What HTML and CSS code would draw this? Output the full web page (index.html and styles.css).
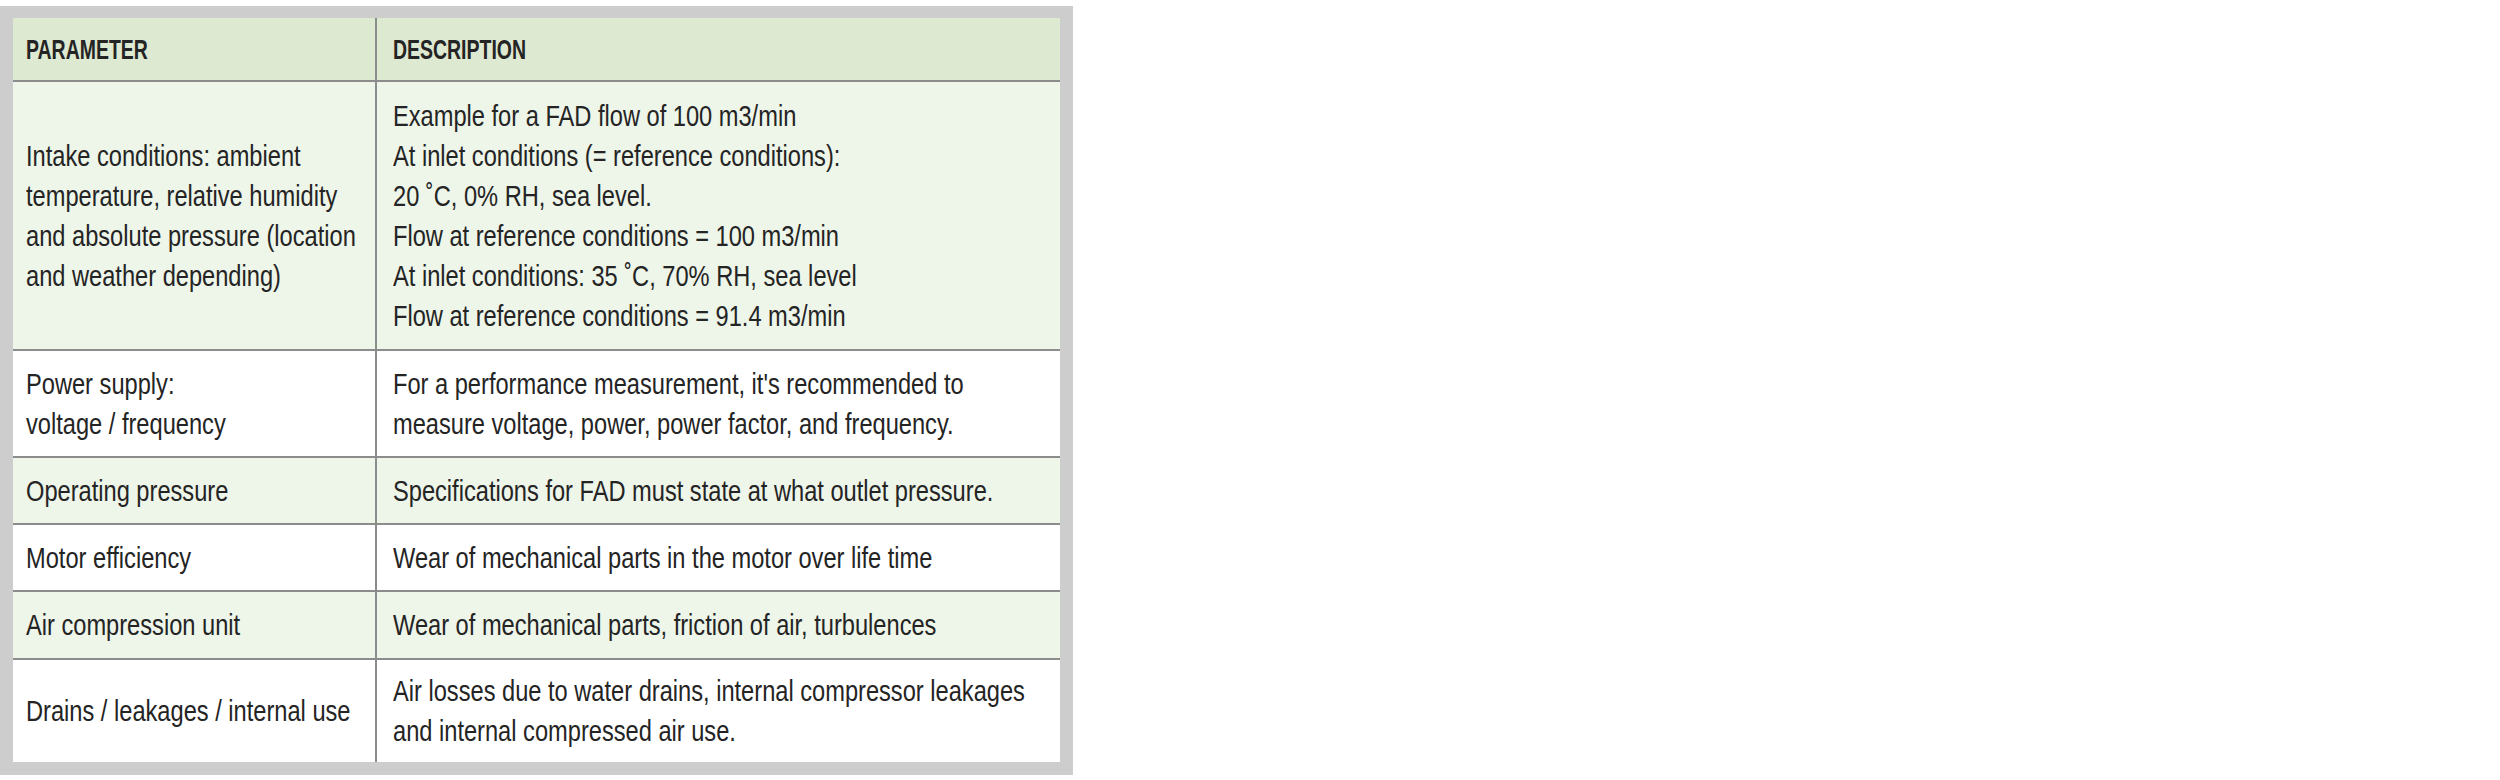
FILE: index.html
```html
<!DOCTYPE html>
<html lang="en">
<head>
<meta charset="utf-8">
<title>Parameters</title>
<link rel="stylesheet" href="styles.css">
</head>
<body>
<div class="frame">
  <table class="params">
    <colgroup>
      <col class="c1">
      <col class="c2">
    </colgroup>
    <thead>
      <tr class="head">
        <th><span class="t">PARAMETER</span></th>
        <th><span class="t">DESCRIPTION</span></th>
      </tr>
    </thead>
    <tbody>
      <tr class="shade r1">
        <td><span class="t">Intake conditions: ambient<br>temperature, relative humidity<br>and absolute pressure (location<br>and weather depending)</span></td>
        <td><span class="t">Example for a FAD flow of 100 m3/min<br>At inlet conditions (= reference conditions):<br>20 ˚C, 0% RH, sea level.<br>Flow at reference conditions = 100 m3/min<br>At inlet conditions: 35 ˚C, 70% RH, sea level<br>Flow at reference conditions = 91.4 m3/min</span></td>
      </tr>
      <tr class="r2">
        <td><span class="t">Power supply:<br>voltage / frequency</span></td>
        <td><span class="t">For a performance measurement, it's recommended to<br>measure voltage, power, power factor, and frequency.</span></td>
      </tr>
      <tr class="shade r3">
        <td><span class="t">Operating pressure</span></td>
        <td><span class="t">Specifications for FAD must state at what outlet pressure.</span></td>
      </tr>
      <tr class="r4">
        <td><span class="t">Motor efficiency</span></td>
        <td><span class="t">Wear of mechanical parts in the motor over life time</span></td>
      </tr>
      <tr class="shade r5">
        <td><span class="t">Air compression unit</span></td>
        <td><span class="t">Wear of mechanical parts, friction of air, turbulences</span></td>
      </tr>
      <tr class="r6">
        <td><span class="t">Drains / leakages / internal use</span></td>
        <td><span class="t">Air losses due to water drains, internal compressor leakages<br>and internal compressed air use.</span></td>
      </tr>
    </tbody>
  </table>
</div>
</body>
</html>
```
FILE: styles.css
```css
html, body {
  margin: 0;
  padding: 0;
  background: #ffffff;
}

body {
  padding-top: 6px;
}

.frame {
  width: 1073px;
  height: 769px;
  box-sizing: border-box;
  background: #cdcdcd;
  padding: 12px 13px 13px 13px;
}

.params {
  width: 1047px;
  border-collapse: collapse;
  table-layout: fixed;
  background: #ffffff;
  font-family: "Liberation Sans", Arial, sans-serif;
  font-size: 29px;
  line-height: 40px;
  color: #242424;
}

.c1 { width: 363px; }
.c2 { width: 684px; }

.t {
  display: inline-block;
  white-space: nowrap;
  transform: scaleX(0.815);
  transform-origin: 0 50%;
}

.head .t {
  transform: scaleX(0.695);
}

.params th,
.params td {
  padding: 0 12px 0 13px;
  vertical-align: middle;
  text-align: left;
  border-top: 2px solid #8c8c8c;
  border-left: 2px solid #8c8c8c;
  overflow: visible;
}

.params th:first-child,
.params td:first-child {
  border-left: none;
}

.params td:last-child,
.params th:last-child {
  padding-left: 16px;
}

.head th {
  border-top: none;
  background: #dee9d1;
  font-weight: bold;
  font-size: 28px;
  height: 60px;
  padding-top: 2px;
}

.shade td {
  background: #eef5e9;
}

.r1 td { height: 267px; }
.r2 td { height: 105px; }
.r3 td { height: 65px; }
.r4 td { height: 65px; }
.r5 td { height: 66px; }
.r6 td { height: 102px; }
```
